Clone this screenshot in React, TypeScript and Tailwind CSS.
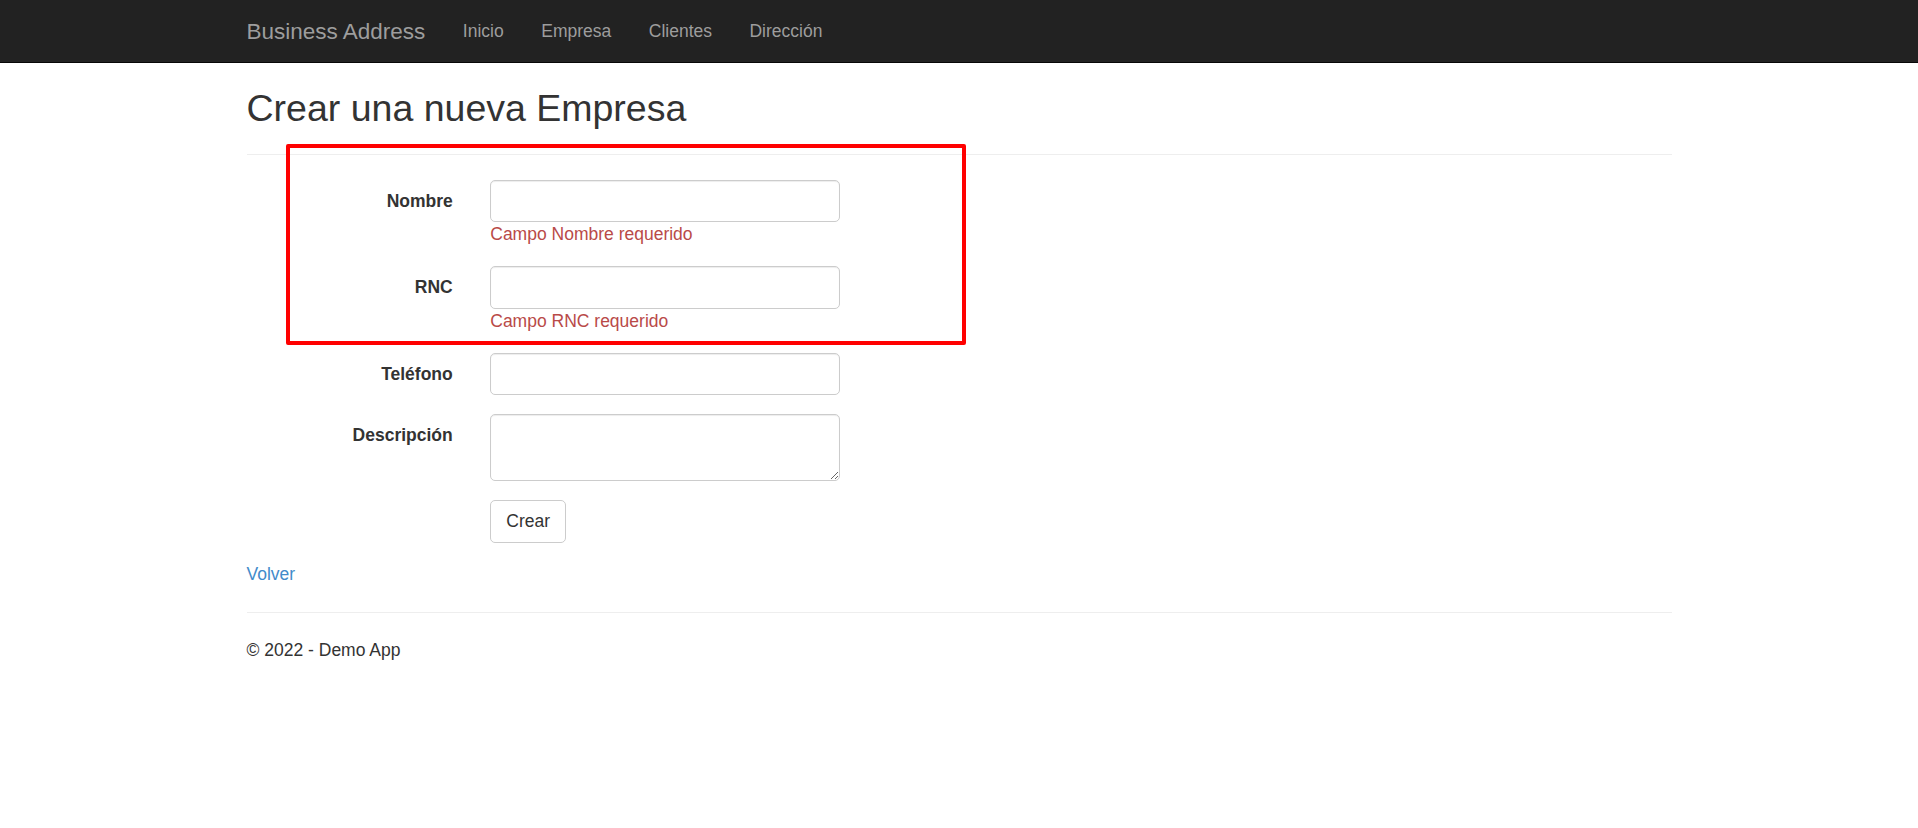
import React from 'react';

const NAV_LINKS = ['Inicio', 'Empresa', 'Clientes', 'Dirección'];

interface Field {
  label: string;
  error?: string;
  multiline?: boolean;
}

const FIELDS: Field[] = [
  { label: 'Nombre', error: 'Campo Nombre requerido' },
  { label: 'RNC', error: 'Campo RNC requerido' },
  { label: 'Teléfono' },
  { label: 'Descripción', multiline: true },
];

const inputClass =
  'block w-full max-w-[350px] rounded-[5px] border border-[#ccc] bg-white px-[15px] text-[17.5px] leading-[25px] text-[#555] shadow-[inset_0_1px_1px_rgba(0,0,0,0.075)] outline-none';

function FormRow({ field }: { field: Field }) {
  return (
    <div className="mx-[-18.75px] mb-[19px] flex">
      <label className="w-[243.75px] shrink-0 px-[18.75px] pt-[8.75px] text-right text-[17.5px] font-bold leading-[25px] text-[#333]">
        {field.label}
      </label>
      <div className="flex-1 px-[18.75px]">
        {field.multiline ? (
          <textarea rows={2} className={`${inputClass} h-[67px] py-[7.5px]`} />
        ) : (
          <input type="text" className={`${inputClass} h-[42.5px] py-[7.5px]`} />
        )}
        {field.error && (
          <span className="text-[17.5px] leading-[25px] text-[#b94a48]">{field.error}</span>
        )}
      </div>
    </div>
  );
}

export default function App() {
  return (
    <div className="relative min-h-[828px] bg-white font-['Liberation_Sans',Arial,sans-serif] text-[17.5px] leading-[25px] text-[#333]">
      {/* Navbar */}
      <nav className="h-[62.5px] border-b border-[#080808] bg-[#222]">
        <div className="mx-auto flex w-[1462.5px] px-[18.75px]">
          <a className="-ml-[18.75px] px-[18.75px] py-[18.75px] text-[22.5px] leading-[25px] text-[#9d9d9d]">
            Business Address
          </a>
          <ul className="flex">
            {NAV_LINKS.map((link) => (
              <li key={link}>
                <a className="block px-[18.75px] py-[18.75px] text-[17.5px] leading-[25px] text-[#9d9d9d]">
                  {link}
                </a>
              </li>
            ))}
          </ul>
        </div>
      </nav>

      {/* Body */}
      <div className="mx-auto w-[1462.5px] px-[18.75px]">
        <h2 className="mt-[25px] text-[37.5px] leading-[41.25px] font-normal text-[#333]">
          Crear una nueva Empresa
        </h2>
        <hr className="my-[25px] border-t border-[#eee]" />

        <form>
          {FIELDS.map((field) => (
            <FormRow key={field.label} field={field} />
          ))}
          <div className="mx-[-18.75px] mb-[18.75px] flex">
            <div className="w-[243.75px] shrink-0" />
            <div className="flex-1 px-[18.75px]">
              <button
                type="button"
                className="h-[42.5px] rounded-[5px] border border-[#ccc] bg-white px-[15px] text-[17.5px] leading-[25px] text-[#333]"
              >
                Crear
              </button>
            </div>
          </div>
        </form>

        <div>
          <a className="text-[#428bca]">Volver</a>
        </div>

        <hr className="my-[25px] border-t border-[#eee]" />
        <footer>
          <p>© 2022 - Demo App</p>
        </footer>
      </div>

      {/* Annotation highlight */}
      <div className="pointer-events-none absolute left-[286px] top-[144px] h-[201px] w-[680px] rounded-[2px] border-4 border-[#ff0000]" />
    </div>
  );
}
